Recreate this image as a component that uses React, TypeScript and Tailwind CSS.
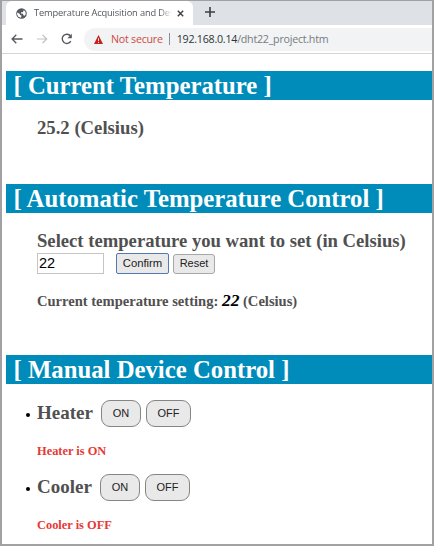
import type { ReactNode } from "react";

function Heading({ children, className }: { children: ReactNode; className: string }) {
  return (
    <h1 className={`ml-1 h-[29px] whitespace-pre bg-[#008cba] pl-[7.5px] text-[24.75px] font-bold leading-[30px] text-white ${className}`}>
      {children}
    </h1>
  );
}

function BrowserBar() {
  return (
    <header className="font-['Open_Sans','Noto_Sans',sans-serif]">
      <div className="flex h-6 bg-[#dee1e6]">
        <div className="w-1 shrink-0 rounded-br-md bg-[#dee1e6]" />
        <div className="flex w-[187px] shrink-0 items-center rounded-t-md bg-white pl-[10px]">
          <svg width="11" height="11" viewBox="0 0 24 24" className="shrink-0">
            <circle cx="12" cy="12" r="11.5" fill="#55595e" />
            <path d="M2.5 10 8 12.5 9 15.5 12 16.5 11 21.5 5 19 2.5 14ZM14.5 3 17 6 14.5 9 11 9.5 11 12 15 12.5 16 16 19 17 21.5 13 20 7Z" fill="#fff" />
          </svg>
          <div className="ml-[7px] w-[138px] whitespace-nowrap bg-linear-to-r from-[#4b4f53] from-91% to-transparent to-100% bg-clip-text text-[9.3px] leading-4 tracking-[-0.15px] text-transparent">
            Temperature Acquisition and Dev
          </div>
          <svg width="7" height="7" viewBox="0 0 7 7" className="ml-[5px] shrink-0">
            <path d="m.8.8 5.4 5.4m0-5.4L.8 6.2" stroke="#3c4043" strokeWidth="1.4" />
          </svg>
        </div>
        <svg width="10" height="10" viewBox="0 0 10 10" className="ml-3 mt-[6px] shrink-0">
          <path d="M5 0v10M0 5h10" stroke="#3c4043" strokeWidth="1.6" />
        </svg>
      </div>
      <div className="flex h-[29px] items-center border-b border-[#d5d6d8] bg-white pl-[9px]">
        <svg width="12" height="10" viewBox="0 0 12 10" className="shrink-0" fill="none" stroke="#55595e" strokeWidth="1.3">
          <path d="M11.5 5H1.2M5.3.8 1.1 5l4.2 4.2" />
        </svg>
        <svg width="11" height="10" viewBox="0 0 11 10" className="ml-[14px] shrink-0" fill="none" stroke="#bdc1c6" strokeWidth="1.2">
          <path d="M0 5h9.5M5.5.8 9.7 5 5.5 9.2" />
        </svg>
        <svg width="12" height="12" viewBox="0 0 12 12" className="ml-[13px] shrink-0">
          <path d="M9.8 8.2A4.6 4.6 0 1 1 9.5 3" fill="none" stroke="#55595e" strokeWidth="1.4" />
          <path d="M10.8.8v4.4H6.4Z" fill="#55595e" />
        </svg>
        <div className="ml-[11px] flex h-[23px] flex-1 items-center whitespace-nowrap rounded-l-full bg-[#f1f3f4] pl-[10px] text-[10.7px] tracking-[-0.25px]">
          <svg width="9" height="9" viewBox="0 0 9 9" className="shrink-0">
            <path d="M4.5 0 9 9H0Z" fill="#c5221f" />
            <path d="M4.5 3.3v2.8M4.5 7v1" stroke="#fff" strokeWidth=".9" />
          </svg>
          <span className="ml-2 text-[#d04a43]">Not secure</span>
          <span className="ml-[6px] h-3 w-px bg-[#8b9095]" />
          <span className="ml-[7px] text-[#777b80]"><span className="text-[#303338]">192.168.0.14</span>/dht22_project.htm</span>
        </div>
      </div>
    </header>
  );
}

function Device({ name, state, labelWidth }: { name: string; state: string; labelWidth: string }) {
  const button = "h-[27px] rounded-[9px] border border-[#858585] bg-[#e9e9e9] font-['Liberation_Sans',Arial,sans-serif] text-[11px] text-[#222]";
  return (
    <li className="h-[74px]">
      <div className="flex h-[27px] items-center">
        <span className="ml-6 mt-[3px] size-1 shrink-0 rounded-full bg-black" />
        <h2 className={`-mt-[2px] ml-[7px] text-[19px] font-bold leading-6 text-[#505050] ${labelWidth}`}>{name}</h2>
        <button className={`${button} w-10`}>ON</button>
        <button className={`${button} ml-[5px] w-[45px]`}>OFF</button>
      </div>
      <p className="ml-[35px] mt-4 text-[12.4px] font-bold leading-4 text-[#e53935]">{name} is {state}</p>
    </li>
  );
}

export default function App() {
  return (
    <div className="h-[550px] w-[435px] overflow-hidden bg-white">
      <main className="flex h-[546px] w-[434px] flex-col border-2 border-t border-[#a1a1a3] bg-white font-['Liberation_Serif','Times_New_Roman',serif]">
        <BrowserBar />
        <Heading className="mt-[17px]">[ Current Temperature ]</Heading>
        <p className="ml-[35px] mt-4 text-[18.7px] font-bold leading-6 text-[#505050]">25.2 (Celsius)</p>
        <Heading className="mt-[44px]">[ Automatic Temperature Control ]</Heading>
        <p className="ml-[35px] mt-4 whitespace-nowrap text-[18.65px] font-bold leading-6 text-[#505050]">Select temperature you want to set (in Celsius)</p>
        <div className="ml-[35px] flex h-[21px] items-center font-['Liberation_Sans',Arial,sans-serif] text-[11px] text-[#222]">
          <input className="h-[21px] w-[67px] border border-[#c5c5c5] pl-px text-[14.5px] text-black" defaultValue="22" />
          <button className="ml-3 h-[21px] w-[53px] rounded-[2px] border border-[#5279b5] bg-[#e9e9e9] text-[11.3px]">Confirm</button>
          <button className="ml-1 h-5 w-[42px] rounded-[3px] border border-[#a7a7a7] bg-[#e9e9e9]">Reset</button>
        </div>
        <p className="ml-[35px] mt-[14px] h-6 whitespace-nowrap text-[14.55px] font-bold leading-6 text-[#505050]">
          Current temperature setting: <em className="text-[17.5px] text-black">22</em> (Celsius)
        </p>
        <Heading className="mt-[43px]">[ Manual Device Control ]</Heading>
        <ul className="mt-4">
          <Device name="Heater" state="ON" labelWidth="w-[64px]" />
          <Device name="Cooler" state="OFF" labelWidth="w-[63px]" />
        </ul>
      </main>
    </div>
  );
}
